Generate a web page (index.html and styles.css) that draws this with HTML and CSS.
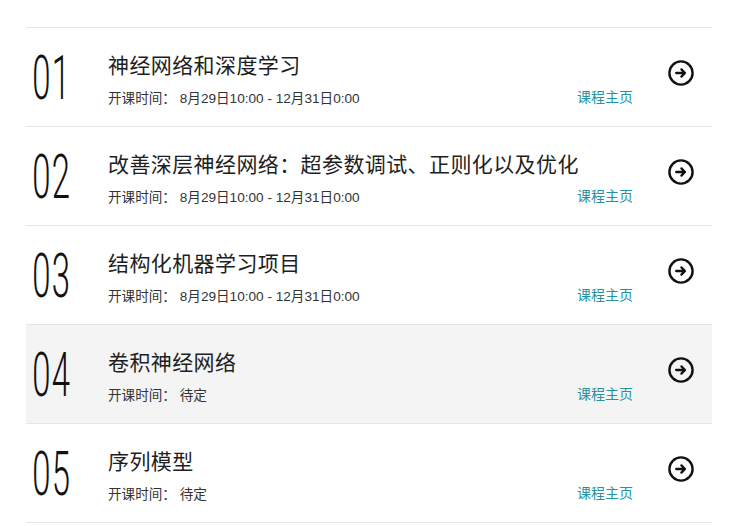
FILE: index.html
```html
<!DOCTYPE html>
<html lang="zh-CN">
<head>
    <meta charset="UTF-8">
    <meta name="viewport" content="width=device-width, initial-scale=1.0">
    <title>深度学习课程</title>
    <link rel="stylesheet" href="styles.css">
</head>
<body>
    <ul class="course-list">
        <li class="course">
            <div class="num">01</div>
            <div class="info">
                <div class="title">神经网络和深度学习</div>
                <div class="meta">开课时间： 8月29日10:00 - 12月31日0:00</div>
            </div>
            <a class="home" href="#">课程主页</a>
            <a class="go" href="#"><svg width="26" height="26" viewBox="0 0 26 26"><circle cx="13" cy="13" r="11.6" fill="none" stroke="#111" stroke-width="2.4"/><path d="M8.2 13h8.6M13.4 9.4l3.6 3.6-3.6 3.6" fill="none" stroke="#111" stroke-width="2.3" stroke-linecap="round" stroke-linejoin="round"/></svg></a>
        </li>
        <li class="course">
            <div class="num">02</div>
            <div class="info">
                <div class="title">改善深层神经网络：超参数调试、正则化以及优化</div>
                <div class="meta">开课时间： 8月29日10:00 - 12月31日0:00</div>
            </div>
            <a class="home" href="#">课程主页</a>
            <a class="go" href="#"><svg width="26" height="26" viewBox="0 0 26 26"><circle cx="13" cy="13" r="11.6" fill="none" stroke="#111" stroke-width="2.4"/><path d="M8.2 13h8.6M13.4 9.4l3.6 3.6-3.6 3.6" fill="none" stroke="#111" stroke-width="2.3" stroke-linecap="round" stroke-linejoin="round"/></svg></a>
        </li>
        <li class="course">
            <div class="num">03</div>
            <div class="info">
                <div class="title">结构化机器学习项目</div>
                <div class="meta">开课时间： 8月29日10:00 - 12月31日0:00</div>
            </div>
            <a class="home" href="#">课程主页</a>
            <a class="go" href="#"><svg width="26" height="26" viewBox="0 0 26 26"><circle cx="13" cy="13" r="11.6" fill="none" stroke="#111" stroke-width="2.4"/><path d="M8.2 13h8.6M13.4 9.4l3.6 3.6-3.6 3.6" fill="none" stroke="#111" stroke-width="2.3" stroke-linecap="round" stroke-linejoin="round"/></svg></a>
        </li>
        <li class="course active">
            <div class="num">04</div>
            <div class="info">
                <div class="title">卷积神经网络</div>
                <div class="meta">开课时间： 待定</div>
            </div>
            <a class="home" href="#">课程主页</a>
            <a class="go" href="#"><svg width="26" height="26" viewBox="0 0 26 26"><circle cx="13" cy="13" r="11.6" fill="none" stroke="#111" stroke-width="2.4"/><path d="M8.2 13h8.6M13.4 9.4l3.6 3.6-3.6 3.6" fill="none" stroke="#111" stroke-width="2.3" stroke-linecap="round" stroke-linejoin="round"/></svg></a>
        </li>
        <li class="course">
            <div class="num">05</div>
            <div class="info">
                <div class="title">序列模型</div>
                <div class="meta">开课时间： 待定</div>
            </div>
            <a class="home" href="#">课程主页</a>
            <a class="go" href="#"><svg width="26" height="26" viewBox="0 0 26 26"><circle cx="13" cy="13" r="11.6" fill="none" stroke="#111" stroke-width="2.4"/><path d="M8.2 13h8.6M13.4 9.4l3.6 3.6-3.6 3.6" fill="none" stroke="#111" stroke-width="2.3" stroke-linecap="round" stroke-linejoin="round"/></svg></a>
        </li>
    </ul>
</body>
</html>
```

FILE: styles.css
```css
body {
    margin: 0;
    background: #fff;
    font-family: "Liberation Sans", "Noto Sans CJK JP", sans-serif;
    color: #222;
}
.course-list {
    list-style: none;
    margin: 27px 0 0 26px;
    padding: 0;
    width: 686px;
    border-top: 1px solid #e6e6e6;
}
.course {
    display: grid;
    grid-template-columns: 82px minmax(0, 1fr) auto 79px;
    height: 98px;
    border-bottom: 1px solid #e6e6e6;
}
.course.active {
    background: #f4f4f4;
}
.num {
    align-self: center;
    font-family: Roboto, sans-serif;
    font-weight: 300;
    font-size: 62px;
    line-height: 62px;
    color: #111;
    letter-spacing: 2px;
    transform: scaleX(0.53);
    transform-origin: left center;
    padding-left: 12px;
    margin-top: 2px;
}
.info {
    padding-top: 25px;
}
.title {
    font-size: 21px;
    line-height: 26px;
    letter-spacing: 0.4px;
    color: #1e1e1e;
    white-space: nowrap;
}
.meta {
    margin-top: 11px;
    font-size: 13.6px;
    line-height: 18px;
    color: #333;
    white-space: nowrap;
}
.home {
    align-self: start;
    margin-top: 60px;
    font-size: 14px;
    line-height: 18px;
    color: #2793a0;
    text-decoration: none;
}
.go {
    align-self: start;
    margin-top: 32px;
    padding-left: 35px;
    display: flex;
}
```
